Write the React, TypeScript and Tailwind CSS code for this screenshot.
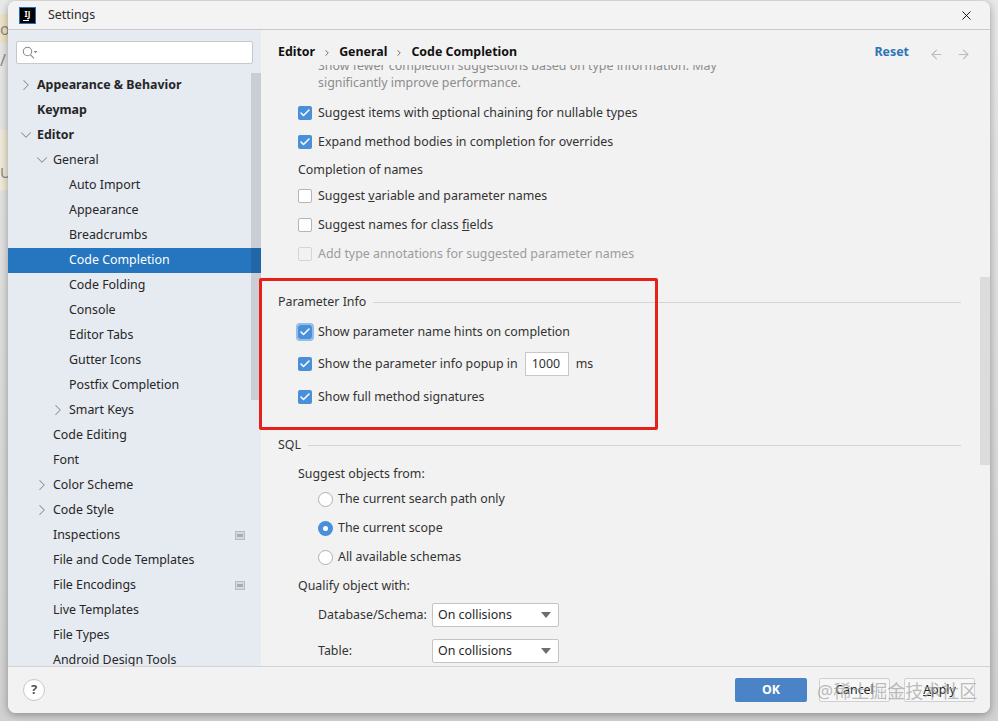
import { ArrowLeft, ArrowRight, Check, ChevronDown, ChevronRight, X } from 'lucide-react';
import type { ReactNode } from 'react';

const tree: { label: string; depth: number; bold?: boolean; arrow?: 'right' | 'down'; selected?: boolean; badge?: boolean }[] = [
  { label: 'Appearance & Behavior', depth: 0, bold: true, arrow: 'right' },
  { label: 'Keymap', depth: 0, bold: true },
  { label: 'Editor', depth: 0, bold: true, arrow: 'down' },
  { label: 'General', depth: 1, arrow: 'down' },
  { label: 'Auto Import', depth: 2 },
  { label: 'Appearance', depth: 2 },
  { label: 'Breadcrumbs', depth: 2 },
  { label: 'Code Completion', depth: 2, selected: true },
  { label: 'Code Folding', depth: 2 },
  { label: 'Console', depth: 2 },
  { label: 'Editor Tabs', depth: 2 },
  { label: 'Gutter Icons', depth: 2 },
  { label: 'Postfix Completion', depth: 2 },
  { label: 'Smart Keys', depth: 2, arrow: 'right' },
  { label: 'Code Editing', depth: 1 },
  { label: 'Font', depth: 1 },
  { label: 'Color Scheme', depth: 1, arrow: 'right' },
  { label: 'Code Style', depth: 1, arrow: 'right' },
  { label: 'Inspections', depth: 1, badge: true },
  { label: 'File and Code Templates', depth: 1 },
  { label: 'File Encodings', depth: 1, badge: true },
  { label: 'Live Templates', depth: 1 },
  { label: 'File Types', depth: 1 },
  { label: 'Android Design Tools', depth: 1 },
];

function TreeRow({ item }: { item: (typeof tree)[number] }) {
  const pad = item.depth === 0 ? 'pl-[29px]' : item.depth === 1 ? 'pl-[45px]' : 'pl-[61px]';
  const arrowPos = item.depth === 0 ? 'left-[9px]' : item.depth === 1 ? 'left-[25px]' : 'left-[41px]';
  const Arrow = item.arrow === 'down' ? ChevronDown : ChevronRight;
  return (
    <div className={`relative flex h-[25px] shrink-0 items-center pb-px ${pad} ${item.selected ? 'bg-[#2675bf] text-white' : 'text-[#262626]'} ${item.bold ? 'font-bold text-[#111]' : ''}`}>
      {item.arrow && <Arrow className={`absolute ${arrowPos} h-[18px] w-[18px] text-[#8b9096]`} strokeWidth={1.4} />}
      {item.label}
      {item.badge && (
        <span className="absolute left-[227px] flex h-[9px] w-[10px] items-center justify-center border border-[#b8bcc2] bg-[#d5d9df]">
          <span className="h-[3px] w-[6px] bg-[#a9adb3]" />
        </span>
      )}
    </div>
  );
}

function CheckBox({ checked = true, disabled = false, focused = false }: { checked?: boolean; disabled?: boolean; focused?: boolean }) {
  if (checked) {
    return (
      <span className={`flex h-[14px] w-[14px] shrink-0 items-center justify-center rounded-[2px] bg-[#4a90d9] ${focused ? 'outline-2 outline-[#93bdea]' : ''}`}>
        <Check className="h-[12px] w-[12px] text-white" strokeWidth={3} />
      </span>
    );
  }
  return <span className={`h-[14px] w-[14px] shrink-0 rounded-[2px] border ${disabled ? 'border-[#d4d4d4] bg-[#f2f2f2]' : 'border-[#b5b5b5] bg-white'}`} />;
}

function Radio({ on = false }: { on?: boolean }) {
  return on ? (
    <span className="flex h-[15px] w-[15px] shrink-0 items-center justify-center rounded-full bg-[#4a90d9]">
      <span className="h-[5px] w-[5px] rounded-full bg-white" />
    </span>
  ) : (
    <span className="h-[15px] w-[15px] shrink-0 rounded-full border border-[#b0b0b0] bg-white" />
  );
}

function Combo() {
  return (
    <div className="flex h-[24px] w-[127px] items-center justify-between rounded-[2px] border border-[#c4c4c4] bg-white pl-[5px] pr-[7px] text-[#262626]">
      On collisions
      <span className="h-0 w-0 border-x-[5px] border-t-[6px] border-x-transparent border-t-[#6e6e6e]" />
    </div>
  );
}

function Row({ className, children }: { className: string; children: ReactNode }) {
  return <div className={`flex h-[24px] shrink-0 items-center ${className}`}>{children}</div>;
}

function Title({ className, text }: { className: string; text: string }) {
  return (
    <Row className={`${className} gap-[7px] pr-[29px]`}>
      {text}
      <span className="h-px flex-1 bg-[#d4d4d4]" />
    </Row>
  );
}

export default function App() {
  return (
    <div
      className="relative h-[721px] w-[998px] overflow-hidden bg-gradient-to-b from-[#e9e9e9] to-[#d2d2d2] text-[12.4px]"
      style={{ fontFamily: '"Noto Sans", "Noto Sans CJK SC", sans-serif' }}
    >
      {/* bits of the editor behind the dialog */}
      <div className="absolute left-0 top-[14px] flex h-[29px] w-[8px] items-center bg-[#eee5c8] text-[16px] text-[#8a8a8a]">o</div>
      <div className="absolute left-0 top-[48px] text-[16px] text-[#8a8a8a]">/</div>
      <div className="absolute left-0 top-[130px] flex h-[60px] w-[8px] items-end bg-[#f0ebd9] pb-[8px] text-[15px] leading-[20px] text-[#8a8a8a]">U</div>

      <div className="absolute left-[8px] top-[1px] flex h-[712px] w-[982px] flex-col overflow-hidden rounded-[8px] bg-[#f2f2f2] shadow-[0_2px_8px_rgba(0,0,0,0.35)]">
        {/* title bar */}
        <div className="flex h-[29px] shrink-0 items-center border-b border-[#c9c9c9] bg-[#f3f3f3] pl-[12px] pr-[16px]">
          <div className="relative flex h-[15px] w-[15px] items-start justify-center bg-black pt-[1px] text-[8px] font-bold leading-[9px] text-white outline outline-[#1d6fb8]">
            IJ
            <span className="absolute bottom-[2px] left-[3px] h-px w-[6px] bg-white" />
          </div>
          <span className="ml-[13px] flex-1 pt-px text-[#2b2b2b]">Settings</span>
          <X className="h-[15px] w-[15px] text-black" strokeWidth={1.4} />
        </div>

        <div className="flex min-h-0 flex-1">
          {/* sidebar */}
          <div className="relative flex w-[253px] shrink-0 flex-col overflow-hidden bg-[#e6eaf1]">
            <div className="mx-[8px] mt-[11px] flex h-[23px] shrink-0 items-center rounded-[2px] border border-[#c6c8cc] bg-white pl-[5px]">
              <svg width="16" height="14" viewBox="0 0 16 14" fill="none" stroke="#8a8a8a" strokeWidth="1.1">
                <circle cx="5.5" cy="5.5" r="4.2" />
                <path d="M8.6 8.8 L12 12.4" />
                <path d="M11.5 5 L15.5 5 L13.5 7.2 Z" fill="#8a8a8a" stroke="none" />
              </svg>
            </div>
            <div className="mt-[9px] flex flex-col">
              {tree.map((item) => (
                <TreeRow key={item.label} item={item} />
              ))}
            </div>
            <div className="absolute right-0 top-[43px] h-[327px] w-[10px] bg-black/12" />
          </div>

          {/* right panel */}
          <div className="relative flex min-w-0 flex-1 flex-col text-[#333]">
            <div className="flex h-[35px] shrink-0 items-end pb-[3px] pl-[17px] pr-[19px]">
              <div className="flex flex-1 items-center font-bold text-[#111]">
                Editor
                <ChevronRight className="mx-[7px] h-[10px] w-[10px] text-[#444]" strokeWidth={1.8} />
                General
                <ChevronRight className="mx-[7px] h-[10px] w-[10px] text-[#444]" strokeWidth={1.8} />
                Code Completion
              </div>
              <span className="mr-[20px] font-bold text-[#2f74b5]">Reset</span>
              <ArrowLeft className="mr-[12px] h-[15px] w-[15px] text-[#bdbdbd]" strokeWidth={1.8} />
              <ArrowRight className="h-[15px] w-[15px] text-[#bdbdbd]" strokeWidth={1.8} />
            </div>

            {/* settings page */}
            <div className="relative flex min-h-0 flex-1 flex-col overflow-hidden pl-[17px]">
              <div className="-mt-[8px] flex h-[18px] shrink-0 items-center pl-[40px] text-[#8c8c8c]">Show fewer completion suggestions based on type information. May</div>
              <div className="flex h-[17px] shrink-0 items-center pl-[40px] text-[#8c8c8c]">significantly improve performance.</div>

              <Row className="mt-[9px] gap-[6px] pl-[20px]"><CheckBox /><span>Suggest items with <span className="underline">o</span>ptional chaining for nullable types</span></Row>
              <Row className="mt-[5px] gap-[6px] pl-[20px]"><CheckBox />Expand method bodies in completion for overrides</Row>
              <Row className="mt-[4px] pl-[20px]">Completion of names</Row>
              <Row className="mt-[2px] gap-[6px] pl-[20px]"><CheckBox checked={false} /><span>Suggest <span className="underline">v</span>ariable and parameter names</span></Row>
              <Row className="mt-[5px] gap-[6px] pl-[20px]"><CheckBox checked={false} /><span>Suggest names for class <span className="underline">f</span>ields</span></Row>
              <Row className="mt-[5px] gap-[6px] pl-[20px] text-[#9c9c9c]"><CheckBox checked={false} disabled />Add type annotations for suggested parameter names</Row>

              <Title className="mt-[24px]" text="Parameter Info" />
              <Row className="mt-[6px] gap-[6px] pl-[20px]"><CheckBox focused />Show parameter name hints on completion</Row>
              <Row className="mt-[8px] gap-[6px] pl-[20px]">
                <CheckBox /><span className="mr-px">Show the parameter info popup in</span>
                <span className="flex h-[24px] w-[44px] items-center border border-[#c8c8c8] bg-white pl-[6px]">1000</span>
                <span className="ml-px">ms</span>
              </Row>
              <Row className="mt-[9px] gap-[6px] pl-[20px]"><CheckBox />Show full method signatures</Row>

              <Title className="mt-[24px]" text="SQL" />
              <Row className="mt-[5px] pl-[20px]">Suggest objects from:</Row>
              <Row className="mt-px gap-[5px] pl-[40px]"><Radio />The current search path only</Row>
              <Row className="mt-[5px] gap-[5px] pl-[40px]"><Radio on />The current scope</Row>
              <Row className="mt-[5px] gap-[5px] pl-[40px]"><Radio />All available schemas</Row>
              <Row className="mt-[5px] pl-[20px]">Qualify object with:</Row>
              <Row className="mt-[5px] pl-[40px]"><span className="w-[114px]">Database/Schema:</span><Combo /></Row>
              <Row className="mt-[12px] pl-[40px]"><span className="w-[114px]">Table:</span><Combo /></Row>

              <div className="absolute right-0 top-[212px] h-[188px] w-[10px] bg-[#dcdcdc]" />
            </div>
          </div>
        </div>

        {/* footer */}
        <div className="flex h-[47px] shrink-0 items-center border-t border-[#d2d2d2] bg-[#f2f2f2] pl-[15px] pr-[15px]">
          <div className="flex h-[22px] w-[22px] items-center justify-center rounded-full border border-[#c8c8c8] bg-white text-[13px] font-bold text-[#555]">?</div>
          <div className="flex-1" />
          <button className="h-[24px] w-[72px] rounded-[2px] bg-[#4a84c6] font-bold text-white">OK</button>
          <button className="ml-[12px] h-[24px] w-[71px] rounded-[2px] border border-[#d0d0d0] bg-[#f7f7f7] text-[#222]">Cancel</button>
          <button className="ml-[14px] h-[24px] w-[71px] rounded-[2px] border border-[#d0d0d0] bg-[#f7f7f7] text-[#222]"><span className="underline">A</span>pply</button>
        </div>
      </div>

      {/* red annotation box */}
      <div className="absolute left-[259px] top-[278px] h-[152px] w-[399px] rounded-[2px] border-[3px] border-[#e8201c]" />

      {/* watermark */}
      <div className="absolute left-[817px] top-[679px] text-[18px] leading-[24px] text-[#a0a0a0]/70">@稀土掘金技术社区</div>
    </div>
  );
}
